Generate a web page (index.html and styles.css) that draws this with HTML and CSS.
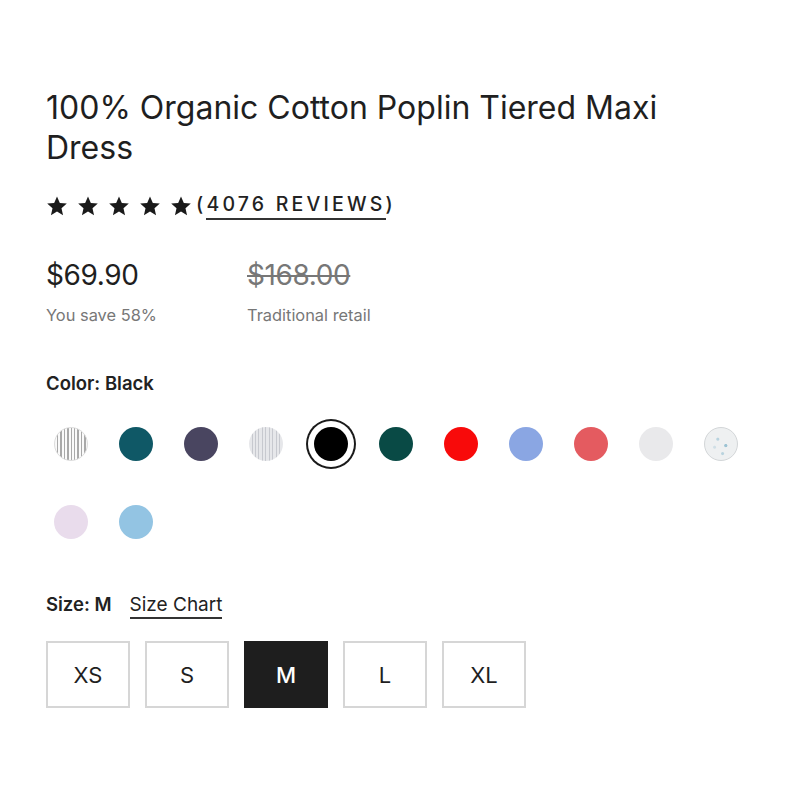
FILE: index.html
```html
<!DOCTYPE html>
<html>
<head>
<meta charset="utf-8">
<link rel="stylesheet" href="styles.css">
</head>
<body>
<main class="product">
  <h1 class="title">100% Organic Cotton Poplin Tiered Maxi Dress</h1>
  <div class="rating">
    <div class="stars">
      <svg class="star" viewBox="0 0 24 24"><path d="M12 1.5l3.1 7.1 7.6.7-5.8 5.1 1.7 7.6L12 18l-6.6 4 1.7-7.6L1.3 9.3l7.6-.7z"/></svg>
      <svg class="star" viewBox="0 0 24 24"><path d="M12 1.5l3.1 7.1 7.6.7-5.8 5.1 1.7 7.6L12 18l-6.6 4 1.7-7.6L1.3 9.3l7.6-.7z"/></svg>
      <svg class="star" viewBox="0 0 24 24"><path d="M12 1.5l3.1 7.1 7.6.7-5.8 5.1 1.7 7.6L12 18l-6.6 4 1.7-7.6L1.3 9.3l7.6-.7z"/></svg>
      <svg class="star" viewBox="0 0 24 24"><path d="M12 1.5l3.1 7.1 7.6.7-5.8 5.1 1.7 7.6L12 18l-6.6 4 1.7-7.6L1.3 9.3l7.6-.7z"/></svg>
      <svg class="star" viewBox="0 0 24 24"><path d="M12 1.5l3.1 7.1 7.6.7-5.8 5.1 1.7 7.6L12 18l-6.6 4 1.7-7.6L1.3 9.3l7.6-.7z"/></svg>
    </div>
    <span class="reviews">(<span class="reviews-link">4076 REVIEWS</span>)</span>
  </div>
  <div class="prices">
    <div class="price-col">
      <div class="price">$69.90</div>
      <div class="price-note">You save 58%</div>
    </div>
    <div class="price-col">
      <div class="price old">$168.00</div>
      <div class="price-note">Traditional retail</div>
    </div>
  </div>
  <div class="label">Color: Black</div>
  <div class="swatches">
    <div class="swatch-cell"><span class="swatch stripe-dark"></span></div>
    <div class="swatch-cell"><span class="swatch c-teal"></span></div>
    <div class="swatch-cell"><span class="swatch c-navy"></span></div>
    <div class="swatch-cell"><span class="swatch stripe-light"></span></div>
    <div class="swatch-cell selected"><span class="swatch c-black"></span></div>
    <div class="swatch-cell"><span class="swatch c-green"></span></div>
    <div class="swatch-cell"><span class="swatch c-red"></span></div>
    <div class="swatch-cell"><span class="swatch c-blue"></span></div>
    <div class="swatch-cell"><span class="swatch c-coral"></span></div>
    <div class="swatch-cell"><span class="swatch c-white"></span></div>
    <div class="swatch-cell"><span class="swatch c-speckle"></span></div>
    <div class="swatch-cell"><span class="swatch c-lilac"></span></div>
    <div class="swatch-cell"><span class="swatch c-sky"></span></div>
  </div>
  <div class="size-head">
    <span class="label inline">Size: M</span>
    <span class="size-chart">Size Chart</span>
  </div>
  <div class="sizes">
    <div class="size">XS</div>
    <div class="size">S</div>
    <div class="size active">M</div>
    <div class="size">L</div>
    <div class="size">XL</div>
  </div>
</main>
</body>
</html>
```
FILE: styles.css
```css
* { box-sizing: border-box; }
body {
  margin: 0;
  background: #fff;
  color: #1f1f1f;
  font-family: "Inter", "Liberation Sans", sans-serif;
}
.product {
  padding: 88px 0 0 46px;
  width: 720px;
}
.title {
  margin: 0;
  font-size: 32px;
  font-weight: 400;
  line-height: 40px;
  letter-spacing: 0;
  width: 670px;
  color: #1f1f1f;
}
.rating {
  display: flex;
  align-items: center;
  margin-top: 22px;
  height: 32px;
}
.stars {
  display: flex;
  gap: 9px;
}
.star {
  width: 22px;
  height: 22px;
  fill: #1a1a1a;
}
.reviews {
  margin-left: 4px;
  font-size: 19.5px;
  letter-spacing: 3.2px;
  font-weight: 500;
  color: #222;
}
.reviews-link {
  display: inline-block;
  border-bottom: 2px solid #333;
  padding-bottom: 2px;
  line-height: 24px;
}
.prices {
  display: flex;
  margin-top: 35px;
}
.price-col {
  width: 201px;
}
.price {
  font-size: 28px;
  line-height: 36px;
  color: #1f1f1f;
  letter-spacing: -0.4px;
}
.price.old {
  color: #777;
  text-decoration: line-through;
  text-decoration-thickness: 2px;
}
.price-note {
  margin-top: 12px;
  font-size: 16.4px;
  color: #777;
  line-height: 20px;
}
.label {
  margin-top: 47px;
  font-size: 18.5px;
  font-weight: 600;
  line-height: 22px;
  color: #222;
}
.label.inline { margin-top: 0; }
.swatches {
  display: flex;
  flex-wrap: wrap;
  width: 720px;
  margin-left: -7.5px;
  margin-top: 25px;
  row-gap: 28px;
}
.swatch-cell {
  width: 65px;
  height: 50px;
  display: flex;
  align-items: center;
  justify-content: center;
}
.swatch-cell.selected .swatch {
  box-shadow: 0 0 0 6px #fff, 0 0 0 8px #1a1a1a;
}
.swatch {
  width: 34px;
  height: 34px;
  border-radius: 50%;
  display: block;
}
.stripe-dark {
  background: repeating-linear-gradient(90deg, #fafafa 0 2px, #a9a9a9 2px 3.4px);
  border: 1px solid #ddd;
}
.stripe-light {
  background: repeating-linear-gradient(90deg, #e6e7ea 0 2.5px, #c7c9cf 2.5px 3.5px);
}
.c-teal { background: #0f5866; }
.c-navy { background: #494560; }
.c-black { background: #000; }
.c-green { background: #094a45; }
.c-red { background: #f80a0a; }
.c-blue { background: #8aa6e3; }
.c-coral { background: #e45b60; }
.c-white { background: #e9e9eb; }
.c-speckle {
  background:
    radial-gradient(circle at 40% 35%, #b8d3df 0 1px, transparent 2px),
    radial-gradient(circle at 65% 55%, #9cc3d3 0 1.2px, transparent 2px),
    radial-gradient(circle at 55% 80%, #b9d3de 0 1px, transparent 2px),
    radial-gradient(circle at 30% 60%, #d0dfe6 0 1px, transparent 2px),
    #eef0f1;
  border: 1.5px solid #d3d6d8;
}
.c-lilac { background: #e9dcec; }
.c-sky { background: #93c4e3; }
.size-head {
  display: flex;
  align-items: baseline;
  gap: 18px;
  margin-top: 46px;
}
.size-chart {
  font-size: 19px;
  line-height: 22px;
  color: #222;
  border-bottom: 2px solid #333;
  padding-bottom: 1px;
}
.sizes {
  display: flex;
  gap: 15px;
  margin-top: 22px;
}
.size {
  width: 84px;
  height: 67px;
  border: 2px solid #d6d6d6;
  display: flex;
  align-items: center;
  justify-content: center;
  font-size: 22px;
  color: #1f1f1f;
}
.size.active {
  background: #1e1e1e;
  border-color: #1e1e1e;
  color: #fff;
  font-weight: 500;
}
```
